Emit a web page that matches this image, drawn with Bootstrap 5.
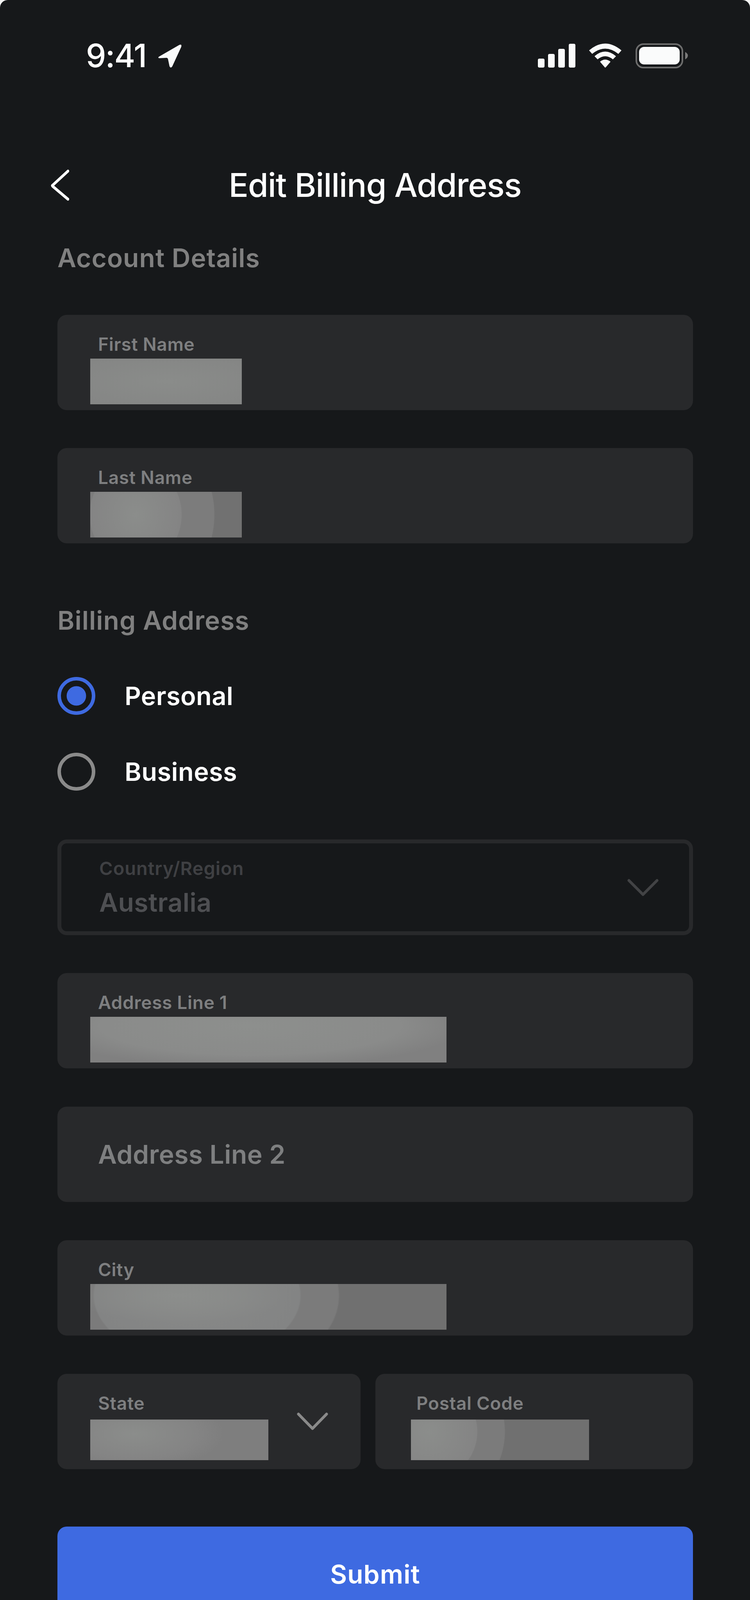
<!DOCTYPE html>
<html lang="en">
<head>
<meta charset="utf-8">
<title>Edit Billing Address</title>
<link rel="stylesheet" href="https://cdn.jsdelivr.net/npm/bootstrap@5.3.0/dist/css/bootstrap.min.css">
<style>
html, body { background: #f4f4f4; margin: 0; }
.phone { width: 1920px; height: 4162px; background: #16181a; border-radius: 20px; overflow: hidden; font-family: Inter, "Liberation Sans", sans-serif; color: #fff; }
.statusline { height: 300px; padding: 110px 158px 0 220px; align-items: flex-start; }
.clock { font-size: 82px; font-weight: 500; line-height: 66px; letter-spacing: -2px; }
.arrow-gap { margin-left: 27px; }
.nav-row { height: 120px; padding: 0 129px; margin-top: 114px; }
.nav-side { flex: 1 1 0; }
.pagetitle { font-size: 84px; font-weight: 500; line-height: 120px; margin: 0; letter-spacing: -1.2px; }
.section-head { font-size: 66px; font-weight: 600; line-height: 80px; color: #808080; margin: 0; letter-spacing: 1px; }
.form-wrap { padding: 0 146px 0 147px; }
.fld { height: 244px; border-radius: 24px; background: #28292b; padding: 45px 0 0 84px; }
.fld-label { font-size: 46px; font-weight: 600; line-height: 60px; height: 60px; margin-left: 20px; color: #7e7f80; letter-spacing: .7px; }
.fld-empty { padding: 0 0 0 104px; line-height: 244px; font-size: 66px; font-weight: 600; color: #7e7f80; letter-spacing: .4px; }
.blur-a, .blur-b, .blur-c, .blur-d, .blur-e, .blur-f { height: 117px; margin-top: 7px; }
.blur-a { width: 388px; background: radial-gradient(ellipse 70% 60% at 50% 50%, #8a8c8a, #858685); }
.blur-b { width: 388px; background: radial-gradient(ellipse 60% 220% at 30% 50%, #8b8d8b 0, #848484 50%, #7c7c7c 51%, #7c7c7c 86%, #717171 87%); }
.blur-c { width: 912px; background: radial-gradient(ellipse 60% 90% at 45% 20%, #8d8f8d 0, #8a8b8a 70%, #808080 100%); }
.blur-d { width: 912px; background: radial-gradient(ellipse 30% 60% at 25% 25%, #8c8e8c 0, transparent 100%), radial-gradient(ellipse 45% 220% at 30% 25%, #888988 0, #838484 64%, #7b7b7b 65%, #7b7b7b 88%, #707070 89%); }
.blur-e { width: 456px; height: 104px; margin-top: 12px; background: radial-gradient(ellipse 50% 90% at 25% 35%, #8b8d8b, #848484 70%, #7e7e7e 100%); }
.blur-f { width: 456px; height: 104px; margin-top: 12px; background: radial-gradient(ellipse 50% 220% at 10% 30%, #8b8d8b 0, #848484 54%, #7b7b7b 55%, #7b7b7b 85%, #707070 86%); }
.radio-row { height: 97px; gap: 75px; font-size: 65px; font-weight: 600; letter-spacing: .4px; }
.radio-dot { width: 97px; height: 97px; flex: none; border-radius: 50%; border: 9px solid #3e6ae1; }
.radio-dot.is-on { background: radial-gradient(circle closest-side, #3e6ae1 0, #3e6ae1 62%, transparent 64%); }
.radio-dot.is-off { border-color: #8a8a8a; }
.locked { height: 245px; border: 10px solid #28292b; border-radius: 24px; padding: 0 78px 0 97px; }
.locked-label { font-size: 47px; font-weight: 600; line-height: 60px; color: #3f4043; letter-spacing: 1px; }
.locked-value { font-size: 66px; font-weight: 600; line-height: 80px; color: #4e4f52; margin-top: 17px; letter-spacing: .4px; }
.half-left { width: 776px; flex: none; }
.half-right { width: 813px; flex: none; padding-left: 91px; }
.half-right .fld-label { margin-left: 14px; }
.chev-state { margin-left: 73px; margin-top: 54px; }
.sub-btn { height: 244px; border-radius: 24px; background: #3e6ae1; border: 0; color: #fff; font-size: 66px; font-weight: 600; width: 100%; letter-spacing: 1px; }
.mt-a { margin-top: 86px; } .mt-b { margin-top: 106px; } .mt-c { margin-top: 97px; } .mt-d { margin-top: 157px; }
.mt-e { margin-top: 105px; } .mt-f { margin-top: 125px; } .mt-g { margin-top: 98px; } .mt-h { margin-top: 147px; }
svg { display: block; flex: none; }
</style>
</head>
<body>
<div class="phone">
  <div class="statusline d-flex justify-content-between">
    <div class="d-flex align-items-center">
      <span class="clock">9:41</span>
      <svg class="arrow-gap" width="66" height="66" viewBox="0 0 66 66"><path d="M6 35 L58 5 Q65 2 63 10 L40 60 Q36 66 33 60 L29 41 Q28 38 25 38 L7 39 Q2 38 6 35Z" fill="#fafbfb"/></svg>
    </div>
    <div class="d-flex align-items-start">
      <svg width="386" height="66" viewBox="1376 110 386 66">
        <rect x="1377" y="150" width="17" height="23" rx="4" fill="#fafbfb"/>
        <rect x="1403" y="138" width="17" height="35" rx="4" fill="#fafbfb"/>
        <rect x="1429" y="125" width="17" height="48" rx="4" fill="#fafbfb"/>
        <rect x="1456" y="112" width="17" height="61" rx="4" fill="#fafbfb"/>
        <path d="M1508 129 Q1549 94 1591 129 L1583 138 Q1549 111 1516 138Z" fill="#fafbfb"/>
        <path d="M1522 144 Q1549 120 1577 144 L1569 152 Q1549 136 1530 152Z" fill="#fafbfb"/>
        <path d="M1536 158 Q1549 147 1563 158 L1551 172 Q1549 174 1548 172Z" fill="#fafbfb"/>
        <rect x="1629" y="113" width="118" height="60" rx="18" fill="none" stroke="#6e6e6e" stroke-width="4"/>
        <rect x="1636" y="120" width="104" height="45" rx="13" fill="#fafbfb"/>
        <path d="M1754 133 Q1761 137 1761 142 Q1761 148 1754 152Z" fill="#7a7a7a"/>
      </svg>
    </div>
  </div>
  <div class="nav-row d-flex align-items-center">
    <div class="nav-side"><svg width="48" height="80" viewBox="0 0 48 80"><path d="M45 4 L6 40 Q4 41 6 43 L45 76" fill="none" stroke="#fff" stroke-width="7" stroke-linecap="round" stroke-linejoin="round"/></svg></div>
    <h1 class="pagetitle">Edit Billing Address</h1>
    <div class="nav-side"></div>
  </div>
  <form class="form-wrap d-flex flex-column">
    <h2 class="section-head mt-a">Account Details</h2>
    <div class="fld mt-b"><div class="fld-label">First Name</div><div class="blur-a"></div></div>
    <div class="fld mt-c"><div class="fld-label">Last Name</div><div class="blur-b"></div></div>
    <h2 class="section-head mt-d">Billing Address</h2>
    <div class="radio-row d-flex align-items-center mt-e"><span class="radio-dot is-on"></span><span>Personal</span></div>
    <div class="radio-row d-flex align-items-center mt-c"><span class="radio-dot is-off"></span><span>Business</span></div>
    <div class="locked d-flex align-items-center justify-content-between mt-f">
      <div><div class="locked-label">Country/Region</div><div class="locked-value">Australia</div></div>
      <svg width="80" height="44" viewBox="0 0 80 44"><path d="M4 4 L40 40 L76 4" fill="none" stroke="#424345" stroke-width="7" stroke-linecap="round" stroke-linejoin="round"/></svg>
    </div>
    <div class="fld mt-c"><div class="fld-label">Address Line 1</div><div class="blur-c"></div></div>
    <div class="fld fld-empty mt-g">Address Line 2</div>
    <div class="fld mt-g"><div class="fld-label">City</div><div class="blur-d"></div></div>
    <div class="d-flex mt-g">
      <div class="fld half-left d-flex"><div><div class="fld-label">State</div><div class="blur-e"></div></div><svg class="chev-state" width="80" height="46" viewBox="0 0 80 46"><path d="M4 4 L40 41 L76 4" fill="none" stroke="#8a8a8a" stroke-width="7" stroke-linecap="round" stroke-linejoin="round"/></svg></div>
      <div class="fld half-right ms-auto"><div class="fld-label">Postal Code</div><div class="blur-f"></div></div>
    </div>
    <button type="button" class="sub-btn btn mt-h">Submit</button>
  </form>
</div>
<script src="https://cdn.jsdelivr.net/npm/bootstrap@5.3.0/dist/js/bootstrap.bundle.min.js"></script>
</body>
</html>
